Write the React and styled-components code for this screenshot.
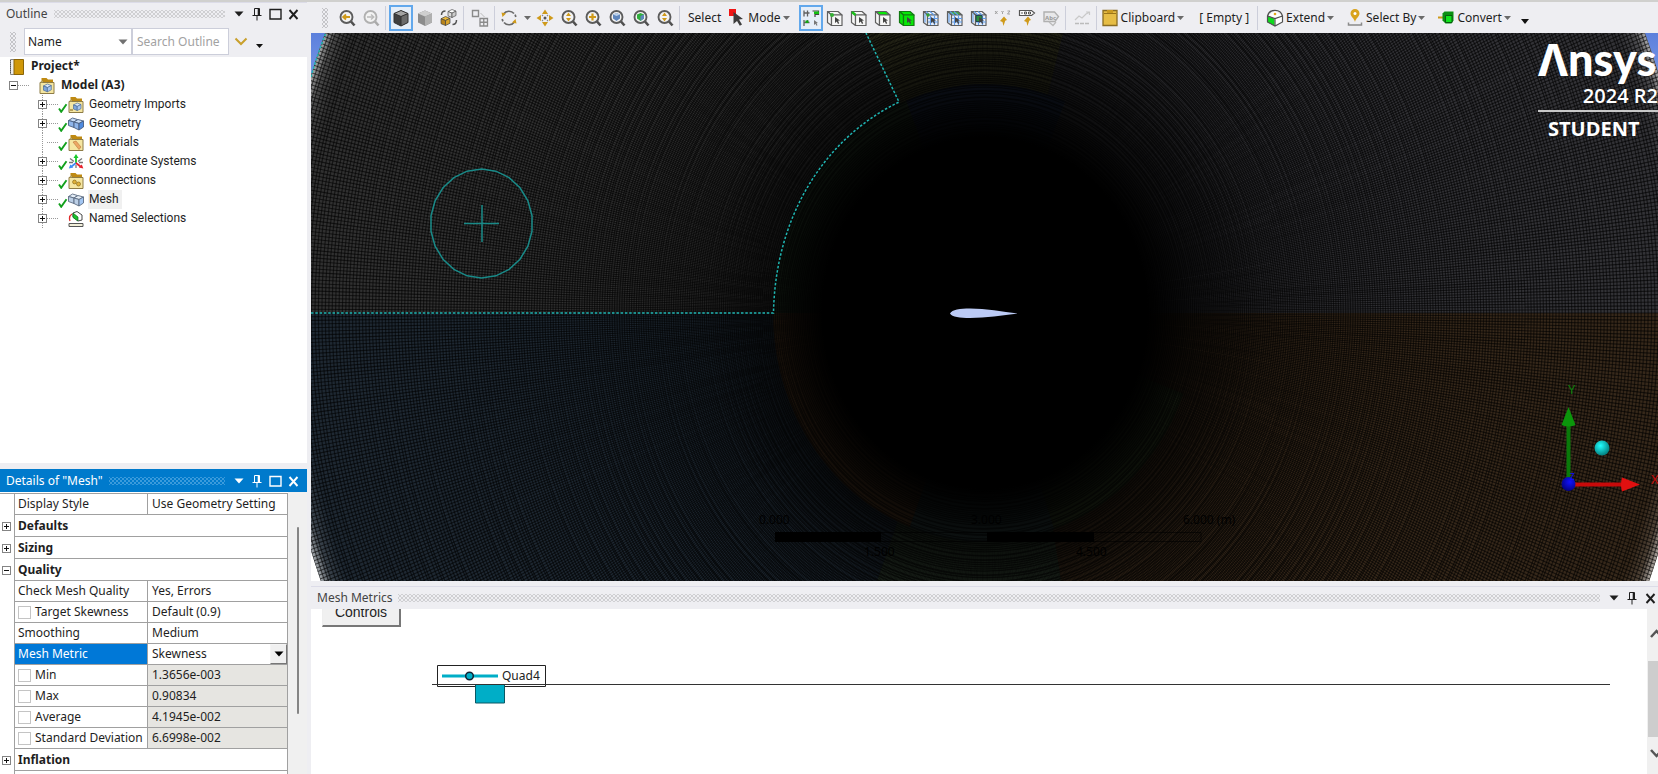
import React from 'react';
import styled, { createGlobalStyle, css } from 'styled-components';

const GlobalStyle = createGlobalStyle`
  *, *::before, *::after { box-sizing: border-box; }
  body {
    margin: 0;
    background: #eeeef2;
    color: #1e1e1e;
    font: 12px/16px "Noto Sans", "Open Sans", sans-serif;
  }
  button, input, select { font: inherit; color: inherit; margin: 0; }
`;

const dots = (color) => css`
  background-image: radial-gradient(${color} 1px, transparent 1px), radial-gradient(${color} 1px, transparent 1px);
  background-size: 4px 4px;
  background-position: 0 0, 2px 2px;
`;

/* ---------- shell ---------- */

const Shell = styled.div`
  display: flex;
  gap: 4px;
  height: 100vh;
  overflow: hidden;
  border-top: 2px solid #d0d0ce;
`;

const Sidebar = styled.aside`
  display: flex;
  flex-direction: column;
  gap: 6px;
  flex: none;
  width: 307px;
`;

const Workspace = styled.main`
  display: flex;
  flex-direction: column;
  flex: 1;
  min-width: 0;
`;

const Panel = styled.section`
  display: flex;
  flex-direction: column;
  min-height: 0;
  ${(p) => (p.$height ? `flex: none; height: ${p.$height}px;` : 'flex: 1;')}
`;

const TitleBar = styled.header`
  display: flex;
  align-items: center;
  gap: 6px;
  flex: none;
  height: 23px;
  padding: 0 ${(p) => (p.$flush ? 0 : 6)}px 0 6px;
  background: ${(p) => (p.$active ? '#007acc' : '#eeeef2')};
  color: ${(p) => (p.$active ? '#fff' : '#444')};
  border-top: 1px solid ${(p) => (p.$active ? '#007acc' : '#dcdce8')};
`;

const Title = styled.h2`
  margin: 0;
  font-size: 12px;
  line-height: 16px;
  font-weight: 400;
`;

const TitleGrip = styled.span`
  flex: 1;
  height: 8px;
  ${(p) => dots(p.$active ? '#3b9bdc' : '#cfcfd2')}
`;

const TitleButtons = styled.span`
  display: flex;
  gap: 2px;
`;

const TitleButton = styled.button`
  display: grid;
  place-items: center;
  width: 16px;
  height: 16px;
  padding: 0;
  border: 0;
  background: none;
  color: ${(p) => (p.$active ? '#fff' : '#1e1e1e')};
`;

const DownIcon = () => (
  <svg width="10" height="6" viewBox="0 0 10 6"><path d="M0.5 0.5h9L5 5.5z" fill="currentColor" /></svg>
);
const PinIcon = () => (
  <svg width="12" height="14" viewBox="0 0 12 14" fill="none" stroke="currentColor">
    <path d="M3.5 8V1.5h5V8" /><path d="M7.5 2v6" strokeWidth="1.6" /><path d="M1.5 8.5h9M6 9v4.5" />
  </svg>
);
const MaxIcon = () => (
  <svg width="13" height="12" viewBox="0 0 13 12"><path d="M1 1.5h11v9.5H1z" fill="none" stroke="currentColor" strokeWidth="1.4" /></svg>
);
const CloseIcon = () => (
  <svg width="11" height="11" viewBox="0 0 11 11"><path d="M1.5 1l8 9M9.500 1l-8 9" fill="none" stroke="currentColor" strokeWidth="1.9" /></svg>
);

function PanelTitle({ text, active, maximizable, flush }) {
  return (
    <TitleBar $active={active} $flush={flush}>
      <Title>{text}</Title>
      <TitleGrip $active={active} />
      <TitleButtons>
        <TitleButton $active={active} aria-label="Options"><DownIcon /></TitleButton>
        <TitleButton $active={active} aria-label="Pin"><PinIcon /></TitleButton>
        {maximizable && <TitleButton $active={active} aria-label="Maximize"><MaxIcon /></TitleButton>}
        <TitleButton $active={active} aria-label="Close"><CloseIcon /></TitleButton>
      </TitleButtons>
    </TitleBar>
  );
}

/* ---------- outline ---------- */

const FilterBar = styled.div`
  display: flex;
  flex: none;
  height: 32px;
  padding: 3px 0 2px 10px;
`;

const Grip = styled.span`
  align-self: center;
  flex: none;
  width: 6px;
  height: 20px;
  ${dots('#c4c4c8')}
`;

const SelectWrap = styled.label`
  position: relative;
  display: flex;
  width: ${(p) => (p.$fill ? '100%' : '108px')};
  margin-left: ${(p) => (p.$fill ? 0 : 8)}px;
`;

const FilterSelect = styled.select`
  appearance: none;
  width: 100%;
  padding: 0 3px;
  border: 1px solid #ccceda;
  border-radius: 0;
  background: #fff;
`;

const SelectArrow = styled.span`
  position: absolute;
  right: 4px;
  top: 50%;
  display: grid;
  transform: translateY(-50%);
  color: #717171;
  pointer-events: none;
`;

const SearchBox = styled.input`
  width: 97px;
  padding: 0 4px;
  border: 1px solid #ccceda;
  background: #fff;
  &::placeholder { color: #a2a2a2; opacity: 1; }
`;

const PlainButton = styled.button`
  display: grid;
  place-items: center;
  width: ${(p) => p.$width || 24}px;
  padding: ${(p) => (p.$low ? '8px 0 0' : 0)};
  border: 0;
  background: none;
`;

const Tree = styled.ul`
  flex: 1;
  margin: 0;
  padding: 0;
  list-style: none;
  background: #fff;
  font: 12px/16px Roboto, "Noto Sans", sans-serif;
`;

const TreeRow = styled.li`
  display: flex;
  align-items: center;
  height: 19px;
  padding-left: ${(p) => [8, 9, 38][p.$level]}px;
  ${(p) => p.$level < 2 && 'font-weight: 700; font-family: "Noto Sans", sans-serif;'}
`;

const Branch = styled.span`
  display: flex;
  align-items: center;
  width: 9px;
  height: 100%;
  background: ${(p) => (p.$line ? 'repeating-linear-gradient(#999 0 1px, transparent 1px 2px) 4px 0 / 1px 100% no-repeat' : 'none')};
`;

const Stub = styled.span`
  width: 11px;
  height: 1px;
  margin-right: ${(p) => p.$after || 0}px;
  background: repeating-linear-gradient(90deg, #999 0 1px, transparent 1px 2px);
`;

const Expander = styled.button`
  display: block;
  width: 9px;
  height: 9px;
  padding: 0;
  border: 1px solid #848484;
  background:
    linear-gradient(#111, #111) center / 5px 1px no-repeat,
    ${(p) => (p.$open ? '' : 'linear-gradient(#111, #111) center / 1px 5px no-repeat,')}
    #fff;
`;

const CheckSlot = styled.span`
  display: flex;
  align-items: flex-end;
  width: 10px;
  height: 17px;
`;

const IconSlot = styled.span`
  display: flex;
  width: 16px;
  height: 16px;
`;

const TreeLabel = styled.span`
  height: 19px;
  margin-left: ${(p) => p.$gap}px;
  padding: 1px 3px 0 1px;
  background: ${(p) => (p.$selected ? '#f0f0f0' : 'none')};
`;

const CheckMark = () => (
  <svg width="10" height="10" viewBox="0 0 10 10"><path d="M1 5.500l2.200 3.300L8.500 1.200" fill="none" stroke="#12a01c" strokeWidth="1.900" /></svg>
);

const Cube = ({ x = 0, y = 0, s = 1, top = '#dbe8f8', left = '#7ea6dc', right = '#a9c6ee', line = '#3d5f92' }) => (
  <g transform={`translate(${x} ${y}) scale(${s})`} stroke={line} strokeWidth=".8" strokeLinejoin="round">
    <path d="M0 2.500L5 0l5 2L5 4.500z" fill={top} />
    <path d="M0 2.500l5 2V10L0 8z" fill={left} />
    <path d="M5 4.500L10 2v5.500L5 10z" fill={right} />
  </g>
);

const Folder = ({ children }) => (
  <svg width="16" height="16" viewBox="0 0 16 16">
    <path d="M2.500 0h5l1.500 1.500h5V5H2.500z" fill="#bf8a12" />
    <path d="M1 4.500h14V15.500H1z" fill="#f5e6a2" stroke="#8e7c46" />
    <path d="M1 4.500l3-2v2z" fill="#d8c274" stroke="#8e7c46" strokeWidth=".5" />
    {children}
  </svg>
);

const DoubleBlock = ({ shades, line }) => (
  <svg width="16" height="16" viewBox="0 0 16 16" stroke={line} strokeWidth=".9" strokeLinejoin="round">
    <path d="M.5 4.500l4-2.500 5 1.500-3.500 2.500z" fill={shades[0]} />
    <path d="M.5 4.500L6 6v5.500L.5 9.500z" fill={shades[1]} />
    <path d="M6 6l4-2.500 5.500 1.500L11 7.500z" fill={shades[0]} />
    <path d="M6 6l5 1.500v6.500l-5-2.500z" fill={shades[1]} />
    <path d="M11 7.500L15.500 5v6L11 14z" fill={shades[2]} />
  </svg>
);

const treeIcons = {
  project: (
    <svg width="16" height="16" viewBox="0 0 16 16">
      <path d="M2.500.5h4v15h-4z" fill="#eee" stroke="#888" />
      <path d="M2.500 1v14" stroke="#555" strokeDasharray="1 1" />
      <path d="M6 .5h9.500v15H6z" fill="#cf9708" stroke="#8a6508" />
    </svg>
  ),
  model: <Folder><Cube x={4.5} y={6} s={0.78} /></Folder>,
  imports: <Folder><Cube x={5.5} y={6} s={0.75} /><path d="M2 13h3" stroke="#7a5a10" /></Folder>,
  geometry: <DoubleBlock shades={['#c8dcf6', '#8fb5ea', '#4f8be0']} line="#4a5f80" />,
  materials: <Folder><path d="M5 7l3-1 5 6-2 2.500z" fill="#eda765" stroke="#b8793a" strokeWidth=".6" /></Folder>,
  coords: (
    <svg width="16" height="16" viewBox="0 0 16 16" fill="none">
      <path d="M8 9V3" stroke="#18c92a" strokeWidth="1.800" /><path d="M5.500 4L8 0l2.500 4z" fill="#18c92a" />
      <path d="M8 9l-4.500 3.500" stroke="#3f8df5" strokeWidth="1.800" /><path d="M.8 14.500l1.500-4 3 3z" fill="#3f8df5" />
      <path d="M8 9l4.500 3.500" stroke="#e8202c" strokeWidth="1.800" /><path d="M15.300 14.500l-1.500-4-3 3z" fill="#e8202c" />
      <path d="M2 4.500l4 3M14 4.500l-4 3M1 8.500h4M11 8.500h4M8 11v3" stroke="#777" strokeWidth="1.300" />
    </svg>
  ),
  connections: (
    <Folder>
      <circle cx="6.500" cy="9" r="1.900" fill="#e0b23a" stroke="#8d6c1a" strokeWidth=".7" />
      <circle cx="10.500" cy="11" r="2" fill="#e0b23a" stroke="#8d6c1a" strokeWidth=".7" />
    </Folder>
  ),
  mesh: <DoubleBlock shades={['#e4edf6', '#bccfe6', '#a3c6f2']} line="#5c6c82" />,
  named: (
    <svg width="16" height="16" viewBox="0 0 16 16">
      <path d="M5 2l4-1.500L14 4v5L10 10 5 6z" fill="#fff" stroke="#333" strokeWidth=".9" />
      <path d="M5 2l5 4v4L5 6.500z" fill="#19c42a" stroke="#126a1a" strokeWidth=".7" />
      <path d="M4 3C1.500 4.500 1 7 2 10" fill="none" stroke="#e02a2a" strokeWidth="1.300" />
      <path d="M1 12.500h14v3H1z" fill="#f2efd9" stroke="#555" />
    </svg>
  ),
};

const treeItems = [
  ['Geometry Imports', 'imports', true, true],
  ['Geometry', 'geometry', true, true],
  ['Materials', 'materials', false, true],
  ['Coordinate Systems', 'coords', true, true],
  ['Connections', 'connections', true, true],
  ['Mesh', 'mesh', true, true],
  ['Named Selections', 'named', true, false],
];

function Outline() {
  return (
    <Panel>
      <PanelTitle text="Outline" maximizable />
      <FilterBar>
        <Grip />
        <SelectWrap>
          <FilterSelect aria-label="Filter by" defaultValue="Name"><option>Name</option></FilterSelect>
          <SelectArrow><DownIcon /></SelectArrow>
        </SelectWrap>
        <SearchBox aria-label="Search Outline" placeholder="Search Outline" />
        <PlainButton aria-label="Expand search">
          <svg width="14" height="9" viewBox="0 0 14 9"><path d="M1.500 1.500L7 7l5.500-5.500" fill="none" stroke="#c9a02c" strokeWidth="2" /></svg>
        </PlainButton>
        <PlainButton $width={12} $low aria-label="More"><svg width="7" height="4" viewBox="0 0 7 4"><path d="M0 0h7L3.500 4z" fill="#111" /></svg></PlainButton>
      </FilterBar>
      <Tree>
        <TreeRow $level={0}><IconSlot>{treeIcons.project}</IconSlot><TreeLabel $gap={6}>Project*</TreeLabel></TreeRow>
        <TreeRow $level={1}>
          <Branch><Expander $open aria-label="Collapse Model" /></Branch>
          <Stub $after={10} />
          <IconSlot>{treeIcons.model}</IconSlot>
          <TreeLabel $gap={5}>Model (A3)</TreeLabel>
        </TreeRow>
        {treeItems.map(([name, icon, expandable, checked]) => (
          <TreeRow key={name} $level={2}>
            <Branch $line>{expandable && <Expander aria-label={`Expand ${name}`} />}</Branch>
            <Stub />
            <CheckSlot>{checked && <CheckMark />}</CheckSlot>
            <IconSlot>{treeIcons[icon]}</IconSlot>
            <TreeLabel $gap={4} $selected={name === 'Mesh'}>{name}</TreeLabel>
          </TreeRow>
        ))}
      </Tree>
    </Panel>
  );
}

/* ---------- details ---------- */

const DetailsBody = styled.div`
  display: flex;
  flex: 1;
  min-height: 0;
  overflow: hidden;
  background: #fff;
`;

const DetailsTable = styled.table`
  flex: 1;
  align-self: flex-start;
  margin-top: 1px;
  table-layout: fixed;
  border-collapse: separate;
  border-spacing: 0;
  border-top: 1px solid #a0a0a0;
`;

const GutterCell = styled.td`
  width: 14px;
  padding: 0 0 0 2px;
`;

const NameCell = styled.th`
  width: 133px;
  height: ${(p) => (p.$section ? 22 : 21)}px;
  padding: 0 0 0 3px;
  border: solid #a0a0a0;
  border-width: 0 ${(p) => (p.$section ? 1 : 0)}px 1px 1px;
  text-align: left;
  white-space: nowrap;
  font-weight: ${(p) => (p.$section ? 700 : 400)};
  ${(p) => p.$selected && 'background: #0078d7; color: #fff;'}
`;

const ValueCell = styled.td`
  padding: 0 0 0 4px;
  border: solid #a0a0a0;
  border-width: 0 1px 1px 1px;
  white-space: nowrap;
  background: ${(p) => (p.$readOnly ? '#e6e5e1' : '#fff')};
`;

const CheckLabel = styled.label`
  display: flex;
  align-items: center;
  gap: 4px;
`;

const Check = styled.input`
  appearance: none;
  width: 13px;
  height: 13px;
  border: 1px solid #c4c4c4;
  background: #fff;
`;

const MetricSelect = styled.select`
  appearance: none;
  width: 100%;
  height: 20px;
  padding: 0;
  border: 0;
  background: none;
`;

const DropArrow = styled.span`
  position: absolute;
  right: 0;
  top: 0;
  display: grid;
  place-items: center;
  width: 17px;
  height: 20px;
  border: 1px solid;
  border-color: #f4f4f4 #777 #777 #f4f4f4;
  background: #f0f0f0;
  color: #000;
  pointer-events: none;
`;

const ThinTrack = styled.div`
  flex: none;
  width: 19px;
  padding: 35px 8px 60px 9px;
  background: #f0f0f0;
`;

const ThinThumb = styled.div`
  height: 100%;
  border-radius: 1px;
  background: #858585;
`;

const details = [
  { name: 'Display Style', value: 'Use Geometry Setting' },
  { section: 'Defaults' },
  { section: 'Sizing' },
  { section: 'Quality', open: true },
  { name: 'Check Mesh Quality', value: 'Yes, Errors' },
  { name: 'Target Skewness', value: 'Default (0.9)', check: true },
  { name: 'Smoothing', value: 'Medium' },
  { name: 'Mesh Metric', value: 'Skewness', selected: true },
  { name: 'Min', value: '1.3656e-003', check: true, readOnly: true },
  { name: 'Max', value: '0.90834', check: true, readOnly: true },
  { name: 'Average', value: '4.1945e-002', check: true, readOnly: true },
  { name: 'Standard Deviation', value: '6.6998e-002', check: true, readOnly: true },
  { section: 'Inflation' },
];

function Details() {
  return (
    <Panel $height={305}>
      <PanelTitle text={'Details of "Mesh"'} active maximizable />
      <DetailsBody>
        <DetailsTable>
          <tbody>
            {details.map((d) =>
              d.section ? (
                <tr key={d.section}>
                  <GutterCell><Expander $open={d.open} aria-label={`Toggle ${d.section}`} /></GutterCell>
                  <NameCell $section colSpan={2} scope="rowgroup">{d.section}</NameCell>
                </tr>
              ) : (
                <tr key={d.name}>
                  <GutterCell />
                  <NameCell scope="row" $selected={d.selected}>
                    {d.check ? <CheckLabel><Check type="checkbox" />{d.name}</CheckLabel> : d.name}
                  </NameCell>
                  <ValueCell $readOnly={d.readOnly}>
                    {d.selected ? (
                      <SelectWrap $fill>
                        <MetricSelect aria-label={d.name} defaultValue={d.value}><option>{d.value}</option></MetricSelect>
                        <DropArrow><DownIcon /></DropArrow>
                      </SelectWrap>
                    ) : d.value}
                  </ValueCell>
                </tr>
              )
            )}
            <tr><GutterCell /><NameCell $section colSpan={2} /></tr>
          </tbody>
        </DetailsTable>
        <ThinTrack><ThinThumb /></ThinTrack>
      </DetailsBody>
    </Panel>
  );
}

/* ---------- toolbar ---------- */

const Toolbar = styled.div`
  display: flex;
  align-items: center;
  flex: none;
  height: 31px;
  padding: 0 0 0 11px;
  overflow: hidden;
`;

const ToolGroup = styled.div`
  display: flex;
  align-items: center;
  flex: none;
  margin-left: ${(p) => p.$before || 0}px;
`;

const ToolButton = styled.button`
  display: grid;
  place-items: center;
  flex: none;
  width: 24px;
  height: 26px;
  padding: 0;
  border: ${(p) => (p.$active ? '2px solid #62a8ec' : '0')};
  background: ${(p) => (p.$active ? '#e6eef8' : 'none')};
`;

const TextButton = styled.button`
  display: flex;
  align-items: center;
  gap: 2px;
  flex: none;
  height: 26px;
  margin-left: ${(p) => p.$before || 0}px;
  padding: 0;
  border: 0;
  background: none;
  white-space: nowrap;
`;

const ToolText = styled.span`
  flex: none;
  margin: 0 ${(p) => p.$after || 0}px 0 ${(p) => p.$before || 0}px;
  white-space: pre;
`;

const Separator = styled.span`
  flex: none;
  width: 1px;
  height: 24px;
  margin: 0 ${(p) => p.$after ?? 4}px 0 2px;
  background: #ccceda;
`;

const Icon = ({ children }) => <svg width="18" height="18" viewBox="0 0 18 18" fill="none">{children}</svg>;

const Lens = ({ children, dim }) => (
  <Icon>
    <circle cx="8.500" cy="8" r="6" stroke={dim ? '#b0b0b0' : '#5c5c5c'} strokeWidth="1.900" fill="#f3f3f3" />
    <path d="M13 12.500l3.500 4" stroke={dim ? '#aaa' : '#505050'} strokeWidth="2.600" />
    {children}
  </Icon>
);

const Pick = () => <path d="M9 8l5 3.500-2 .3 1.200 2.500-1.200.6-1.200-2.500L9 14z" fill="#444" />;

const Box3 = ({ top = '#f6f6f6', left = '#f6f6f6', right = '#f6f6f6', line = '#606060', children }) => (
  <Icon>
    <g stroke={line} strokeWidth="1.200" strokeLinejoin="round">
      <path d="M1.500 2.500h10.500L16 6H5.500z" fill={top} />
      <path d="M1.500 2.500l4 3.500v10.500l-4-3z" fill={left} />
      <path d="M5.500 6H16v10.500H5.500z" fill={right} />
    </g>
    {children}
    <Pick />
  </Icon>
);

const GridLines = () => (
  <path d="M8.500 6.500v9.500M12.500 6.500v9.500M3 4.500v9M6 9.500h10M6 13h10M4 2.500l4 3.500M8 2.500l4 3.500" stroke="#5f9be8" strokeWidth="1.200" />
);

const Iso = ({ dark }) => (
  <Icon>
    <path d="M9 1.500l7 3v9l-7 3.500-7-3.500v-9z" fill={dark ? '#3f3f3f' : '#8c8c8c'} />
    <path d="M9 1.500l7 3-7 3-7-3z" fill={dark ? '#a4a4a4' : '#cfcfcf'} />
    <path d="M9 7.500l7-3v9L9 17z" fill={dark ? '#6b6b6b' : '#b0b0b0'} />
    {dark && <path d="M9 1.500l7 3v9l-7 3.500-7-3.500v-9zM2 4.500l7 3 7-3M9 7.500V17" stroke="#333" />}
  </Icon>
);

const Caret = () => <svg width="7" height="4" viewBox="0 0 7 4"><path d="M0 0h7L3.500 4z" fill="#6a6a6a" /></svg>;

const gold = '#cf9a1a';
const green = '#08e808';

const tools = {
  prev: <Lens><path d="M5 8h7M8 5.500L5.200 8 8 10.500" stroke={gold} strokeWidth="1.900" /></Lens>,
  next: <Lens dim><path d="M5 8h7M9 5.500L11.800 8 9 10.500" stroke="#bbb" strokeWidth="1.400" /></Lens>,
  wire: (
    <Icon>
      <Cube x={8} y={0.5} s={0.8} top="#fff" left="#ddd" right="#ccc" line="#444" />
      <Cube x={1} y={7.500} s={0.9} top="#e8b73a" left="#b8831a" right="#d9a42c" line="#444" />
      <path d="M1.500 6c0-2.500 1.500-4 4-4M16.500 11c0 3-1.500 4.500-4 4.500" stroke="#555" strokeWidth="1.500" />
    </Icon>
  ),
  layout: (
    <Icon>
      <path d="M1.500 1.500h6v6h-6z" stroke="#8a8a8a" strokeWidth="1.400" />
      <path d="M9.500 4l4 4" stroke="#bbb" />
      <path d="M9 9.500h7.500V17H9zM12.750 9.500V17M9 13.250h7.500" stroke="#8a8a8a" strokeWidth="1.300" />
    </Icon>
  ),
  rotate: (
    <Icon>
      <path d="M3.500 5A6.800 6.800 0 0 1 14 4.500M14.500 13A6.800 6.800 0 0 1 4 13.500M2.200 10A6.800 6.800 0 0 0 3 12.300M15.800 8A6.800 6.800 0 0 0 15 5.700" stroke="#6a6a6a" strokeWidth="1.700" />
      <path d="M1.500 3.500l4.500 1-3.500 3.500zM16.500 14.500l-4.500-1 3.500-3.500z" fill={gold} />
    </Icon>
  ),
  pan: (
    <Icon>
      <path d="M9 .5l3 4.500H6zM9 17.500l3-4.500H6zM.5 9l4.500-3v6zM17.500 9l-4.500-3v6z" fill={gold} />
      <circle cx="9" cy="9" r="1.500" fill="#555" />
      <path d="M6 6l1 1M12 6l-1 1M6 12l1-1M12 12l-1-1" stroke="#888" strokeWidth="1.200" />
    </Icon>
  ),
  zoom: <Lens><path d="M8.500 3.500l2.500 3.500H6zM8.500 12.500L11 9H6z" fill={gold} /></Lens>,
  zoomIn: <Lens><path d="M8.500 4.500v7M5 8h7" stroke={gold} strokeWidth="2.200" /></Lens>,
  fit: <Lens><path d="M8.500 4l3.500 1.500v4L8.500 12 5 9.500v-4z" fill="#5e86bd" /><path d="M5 5.500L8.500 7 12 5.500 8.500 4z" fill="#b9cfea" /></Lens>,
  fitSel: <Lens><path d="M8.500 4l3.500 1.500v4L8.500 12 5 9.500v-4z" fill="#2fae3c" /><path d="M8.500 7L12 5.500v4L8.500 12z" fill="#5e86bd" /></Lens>,
  arrow: (
    <Icon>
      <path d="M1 0h7v7H1z" fill="#f01414" />
      <path d="M5.500 3l9.500 7-4 .5 3 5-2.200 1.200L9 12l-3.500 3z" fill="#3c3c3c" />
    </Icon>
  ),
  smart: (
    <Icon>
      <path d="M2 1.500v6M2 4h5.500M5.500 1.500v6M2 11v6M2 13.500h5.500M5.500 11v2" stroke="#606060" strokeWidth="1.300" />
      <path d="M10.500 2h6v3.500h-3.500v2.500" stroke="#444" strokeWidth="1.200" />
      <path d="M12 2.500h5V5h-5z" fill="#12c012" /><path d="M3.500 11.500h3V14h-3z" fill="#12a812" />
      <path d="M12 11l4 3-1.500.3 1 2-1 .5-1-2L12 16z" fill="#777" />
    </Icon>
  ),
  vertex: <Box3><circle cx="6" cy="6" r="2" fill="#35b035" /></Box3>,
  edge: <Box3><path d="M2 3l3.500 3" stroke="#18c018" strokeWidth="2.400" /></Box3>,
  face: <Box3 top={green} />,
  body: <Box3 top={green} left={green} right={green} line="#127a12" />,
  node: <Box3 right="#e6eefa"><GridLines /><circle cx="6" cy="6" r="1.700" fill="#35a035" /></Box3>,
  elemFace: <Box3 top="#3fae3f" right="#e6eefa"><GridLines /></Box3>,
  elem: <Box3 right="#e6eefa"><GridLines /><path d="M6 6.500h6v6H6z" fill="#2b8f3c" stroke="#245" /></Box3>,
  chart: (
    <Icon>
      <path d="M2 11l4-4 3 2 4-4 3-1.500M13 3h3.500v3" stroke="#c9c9c9" strokeWidth="1.200" />
      <path d="M2 14.500h14" stroke="#bbb" strokeWidth="1.500" strokeDasharray="4 1" />
    </Icon>
  ),
  clipboard: (
    <Icon>
      <path d="M2 1.500h14v15H2z" fill="#e6bd45" stroke="#8a6d22" strokeWidth="1.300" />
      <path d="M6 1h6v3H6z" fill="#c99a22" /><path d="M3 4.500h12" stroke="#9a7418" />
    </Icon>
  ),
  extend: (
    <Icon>
      <path d="M1.500 7.500L9 1.500l7.500 6v5.500L9 17l-7.500-4z" fill="#fff" />
      <path d="M1.500 7.500L8.500 9.500v7L1.500 13.500z" fill="#0ddb1d" />
      <path d="M1.500 7c1-4 4-5.700 7.500-5.700S15.500 3 16.500 7v6L9 17l-7.500-4zM1.500 7L9 9.500 16.500 7M9 9.500V17" stroke="#505050" strokeWidth="1.200" />
      <circle cx="9" cy="5" r="1.300" fill="#e2a61c" />
    </Icon>
  ),
  selectBy: (
    <Icon>
      <path d="M9 0a4.500 4.500 0 0 1 4.500 4.500C13.500 7.500 10 9 9 13 8 9 4.500 7.500 4.500 4.500A4.500 4.500 0 0 1 9 0z" fill="#d9a31c" />
      <circle cx="9" cy="4.500" r="1.500" fill="#fff" /><path d="M2.500 13.500v2.500h13v-2.500" stroke="#8b8b8b" strokeWidth="1.500" />
    </Icon>
  ),
  convert: (
    <Icon>
      <path d="M1 8.500h5" stroke={gold} strokeWidth="2" />
      <path d="M5.500 4.500l2-2h9v9l-2 3h-6l-3-3z" fill="#0a8f12" />
      <path d="M8.500 6.500h6.500v7H8.500z" fill="#0fe51c" stroke="#0a5a10" />
    </Icon>
  ),
  coords: (
    <Icon>
      <path d="M1 2l2.500 3M3.500 2L1 5M7.500 2l1 1.500 1-1.500M8.500 3.500V5M13.500 2H16l-2.500 3H16" stroke="#999" strokeWidth=".9" />
      <path d="M9.500 17l-1-4-2.500-1 4-4.500 3 3.500-1.800.8z" fill={gold} />
    </Icon>
  ),
  probe: (
    <Icon>
      <path d="M1.500 1.500h12l3 2.500-3 2.500h-12z" stroke="#555" strokeWidth="1.200" fill="#fff" />
      <path d="M4 3v2M6.500 3h2v2h-2zM10.500 3h2v2h-2z" stroke="#444" strokeWidth=".9" />
      <path d="M9.500 17l-1-4-2.500-1 4-4.500 3 3.500-1.800.8z" fill={gold} />
    </Icon>
  ),
  label: (
    <Icon>
      <path d="M2 3h10.500l4 4.500-3.500 5H2z" stroke="#b0b0b0" strokeWidth="1.400" fill="#e8e8ea" />
      <text x="3" y="10.500" fontSize="6" fontWeight="700" fill="#999">Abc</text>
      <path d="M7 13l4 3.500 3-3.500" stroke="#bbb" strokeWidth="1.300" />
    </Icon>
  ),
};

const Tool = ({ label, active, children }) => <ToolButton $active={active} aria-label={label} title={label}>{children}</ToolButton>;

function MainToolbar() {
  return (
    <Toolbar role="toolbar">
      <Grip />
      <ToolGroup $before={7}>
        <Tool label="Previous view">{tools.prev}</Tool>
        <Tool label="Next view">{tools.next}</Tool>
      </ToolGroup>
      <Separator $after={3} />
      <Tool label="Shaded exterior and edges" active><Iso dark /></Tool>
      <Tool label="Shaded exterior"><Iso /></Tool>
      <Tool label="Wireframe">{tools.wire}</Tool>
      <Separator />
      <Tool label="Show mesh">{tools.layout}</Tool>
      <Separator $after={2} />
      <Tool label="Rotate">{tools.rotate}</Tool>
      <PlainButton $width={12} aria-label="Rotate options"><Caret /></PlainButton>
      <Tool label="Pan">{tools.pan}</Tool>
      <Tool label="Zoom">{tools.zoom}</Tool>
      <Tool label="Box zoom">{tools.zoomIn}</Tool>
      <Tool label="Zoom to fit">{tools.fit}</Tool>
      <Tool label="Zoom to selection">{tools.fitSel}</Tool>
      <Tool label="Magnifier">{tools.zoom}</Tool>
      <Separator $after={8} />
      <ToolText $after={7}>Select</ToolText>
      <TextButton>{tools.arrow}<ToolText>Mode</ToolText><Caret /></TextButton>
      <ToolGroup $before={9}>
        <Tool label="Smart select" active>{tools.smart}</Tool>
        <Tool label="Vertex">{tools.vertex}</Tool>
        <Tool label="Edge">{tools.edge}</Tool>
        <Tool label="Face">{tools.face}</Tool>
        <Tool label="Body">{tools.body}</Tool>
        <Tool label="Node">{tools.node}</Tool>
        <Tool label="Element face">{tools.elemFace}</Tool>
        <Tool label="Element">{tools.elem}</Tool>
        <Tool label="Coordinates">{tools.coords}</Tool>
        <Tool label="Probe">{tools.probe}</Tool>
        <Tool label="Label">{tools.label}</Tool>
      </ToolGroup>
      <Separator />
      <Tool label="Chart">{tools.chart}</Tool>
      <Separator />
      <TextButton>{tools.clipboard}<ToolText>Clipboard</ToolText><Caret /></TextButton>
      <ToolText $before={15} $after={6}>[ Empty ]</ToolText>
      <Separator $after={8} />
      <TextButton>{tools.extend}<ToolText>Extend</ToolText><Caret /></TextButton>
      <TextButton $before={12}>{tools.selectBy}<ToolText>Select By</ToolText><Caret /></TextButton>
      <TextButton $before={12}>{tools.convert}<ToolText>Convert</ToolText><Caret /></TextButton>
      <PlainButton $width={28} $low aria-label="More tools"><svg width="8" height="5" viewBox="0 0 8 5"><path d="M0 0h8L4 5z" fill="#111" /></svg></PlainButton>
    </Toolbar>
  );
}

/* ---------- graphics view ---------- */

const Viewport = styled.div`
  position: relative;
  flex: 1;
  min-height: 0;
  margin-bottom: 5px;
  overflow: hidden;
  background: linear-gradient(#5c80dc, #7a9ae8 10%, #fff 90%);
`;

const Scene = styled.svg`
  display: block;
  width: 100%;
  height: 100%;
`;

const Brand = styled.div`
  position: absolute;
  top: 0;
  right: 0;
  width: 120px;
  color: #fff;
`;

const BrandName = styled.div`
  font: 900 45px/52px Lato, sans-serif;
  white-space: nowrap;
`;

const BrandMark = styled.span`
  font-family: "Noto Sans", sans-serif;
  font-weight: 700;
`;

const BrandRelease = styled.div`
  text-align: right;
  white-space: nowrap;
  font: 600 20px/22px "Open Sans", sans-serif;
`;

const BrandEdition = styled.div`
  margin-top: 3px;
  padding: 5px 0 0 10px;
  border-top: 2px solid #c8c8c8;
  font: 700 20px/24px "Open Sans", sans-serif;
`;

const CX = 674;
const CY = 280;
const R = 709;
const K = 1.08;

const ringPath = (() => {
  let d = '';
  for (let r = R; r > 150; r -= 1.2 + 2.4 * (r / R)) {
    const a = r.toFixed(2);
    const b = (r * K).toFixed(2);
    d += `M${(CX - r).toFixed(2)} ${CY}a${a} ${b} 0 1 1 ${(2 * r).toFixed(2)} 0a${a} ${b} 0 1 1 ${(-2 * r).toFixed(2)} 0`;
  }
  return d;
})();

const spokePath = (() => {
  let d = '';
  const n = 1240;
  for (let i = 0; i < n; i += 1) {
    const t = (i / n) * Math.PI * 2;
    const c = Math.cos(t);
    const s = Math.sin(t) * K;
    d += `M${(CX + 150 * c).toFixed(1)} ${(CY + 150 * s).toFixed(1)}L${(CX + R * c).toFixed(1)} ${(CY + R * s).toFixed(1)}`;
  }
  return d;
})();

const markerPoints = Array.from({ length: 22 }, (_, i) => {
  const t = ((i + 0.5) / 22) * Math.PI * 2;
  return `${(170.5 + 51 * Math.cos(t)).toFixed(1)},${(190.5 + 54.5 * Math.sin(t)).toFixed(1)}`;
}).join(' ');

function MeshScene() {
  return (
    <Scene viewBox="0 0 1347 548" preserveAspectRatio="xMidYMid slice" role="img" aria-label="Airfoil mesh">
      <defs>
        <clipPath id="domain"><ellipse cx={CX} cy={CY} rx={R} ry={R * K} /></clipPath>
        <clipPath id="inner"><ellipse cx={CX} cy={CY} rx="212" ry="229" /></clipPath>
        <radialGradient id="rim" gradientUnits="userSpaceOnUse" cx="0" cy="0" r={R} gradientTransform={`translate(${CX} ${CY}) scale(1 ${K})`}>
          <stop offset=".965" stopColor="#fff" stopOpacity="0" />
          <stop offset=".985" stopColor="#fff" stopOpacity=".12" />
          <stop offset="1" stopColor="#fff" stopOpacity=".6" />
        </radialGradient>
        <radialGradient id="core" gradientUnits="userSpaceOnUse" cx="0" cy="0" r="280" gradientTransform={`translate(${CX} ${CY}) scale(1 ${K})`}>
          <stop offset=".58" stopColor="#000" />
          <stop offset=".74" stopColor="#000" stopOpacity=".3" />
          <stop offset="1" stopColor="#000" stopOpacity="0" />
        </radialGradient>
        <radialGradient id="ball" cx=".4" cy=".35" r=".7"><stop offset="0" stopColor="#2ff" /><stop offset="1" stopColor="#077" /></radialGradient>
        <radialGradient id="origin" cx=".6" cy=".35" r=".8"><stop offset="0" stopColor="#11f" /><stop offset="1" stopColor="#006" /></radialGradient>
      </defs>
      <g clipPath="url(#domain)">
        <rect width="674" height="280" fill="#303030" />
        <rect x="674" width="673" height="280" fill="#323236" />
        <rect y="280" width="674" height="268" fill="#1e2832" />
        <rect x="674" y="280" width="673" height="268" fill="#36281a" />
        <path d="M555 0L588 69 674 280 735 69 752 0z" fill="#3c3c26" />
        <path d="M566 548L600 450 674 280 735 450 750 548z" fill="#283428" />
        <g clipPath="url(#inner)">
          <path d="M674 280H440V0h130z" fill="#243424" />
          <path d="M674 280L570 0h210z" fill="#1e2a40" />
          <path d="M674 280H440v268h140z" fill="#4a3420" />
          <path d="M674 280L580 548h180z" fill="#283838" />
          <path d="M674 280L760 548h160V380z" fill="#2e3a22" />
        </g>
        <rect width="1347" height="548" fill="url(#rim)" />
        <path d={ringPath} fill="none" stroke="#000" strokeWidth="1.2" strokeOpacity=".55" />
        <path d={spokePath} fill="none" stroke="#000" strokeWidth="1.1" strokeOpacity=".6" />
        <rect width="1347" height="548" fill="url(#core)" />
      </g>

      <path d="M639 280.500c2-4 10-5 20-5 16 0 32 3 48 5-16 2-32 4.500-48 4.500-10 0-18-1-20-4.500z" fill="#bccbf5" />

      <g fill="none" stroke="#1fb5b2" strokeWidth="1.500">
        <path d="M0 280H462.500C464 190 508 108 588 69L555 0" strokeDasharray="2.500 1.800" />
        <path d="M0 44Q6 22 15 0" strokeDasharray="2.500 1.800" />
        <polygon points={markerPoints} stroke="#198a88" />
        <path d="M171 172v37M153 190.500h35" stroke="#198a88" />
      </g>

      <g fill="#000" fontSize="12">
        <path d="M464 499h106v10H464zM676 499h107v10H676z" />
        <path d="M570 499.500h106M570 508.500h106M783 499.500h107v9H783" fill="none" stroke="#000" strokeOpacity=".6" />
        <text x="448" y="491">0.000</text>
        <text x="660" y="491">3.000</text>
        <text x="872" y="491">6.000 (m)</text>
        <text x="553" y="523">1.500</text>
        <text x="765" y="523">4.500</text>
      </g>

      <g>
        <path d="M1257.500 449V390" stroke="#0a7a0a" strokeWidth="4" />
        <path d="M1257.500 374l7 18q-7 3-14 0z" fill="#0b960b" />
        <path d="M1262 451.500h50" stroke="#c80a0a" strokeWidth="4" />
        <path d="M1329 451.500l-18 7q-2-7 0-14z" fill="#e01010" />
        <circle cx="1257.500" cy="451" r="7" fill="url(#origin)" />
        <circle cx="1291" cy="415" r="7.500" fill="url(#ball)" />
        <text x="1257" y="361" fontSize="13" fill="#0b7d0b">Y</text>
        <text x="1340" y="451" fontSize="13" fill="#c80a0a">X</text>
        <text x="1259" y="447" fontSize="8" fill="#11f">Z</text>
      </g>
    </Scene>
  );
}

/* ---------- mesh metrics ---------- */

const MetricsBody = styled.div`
  display: flex;
  flex: 1;
  min-height: 0;
  overflow: hidden;
  background: #fff;
`;

const MetricsContent = styled.div`
  display: flex;
  flex-direction: column;
  align-items: flex-start;
  flex: 1;
  min-width: 0;
  padding: 0 37px 0 11px;
`;

const ControlsButton = styled.button`
  width: 79px;
  height: 26px;
  margin-top: -8px;
  padding: 0 0 3px;
  border: 1px solid;
  border-color: #eee #777 #777 #eee;
  border-width: 1px 2px 2px 1px;
  background: #f0f0f0;
  font: 14px/16px "Liberation Sans", Arial, sans-serif;
`;

const Chart = styled.svg`
  display: block;
  width: 100%;
  height: 60px;
  margin-top: 29px;
`;

const ScrollTrack = styled.div`
  display: flex;
  flex-direction: column;
  justify-content: space-between;
  align-items: flex-start;
  flex: none;
  width: 11px;
  padding: 18px 0 14px 1px;
  overflow: hidden;
  background: #f0f0f0;
`;

const ScrollThumb = styled.div`
  width: 17px;
  height: 76px;
  margin-top: 10px;
  background: #cdcdcd;
`;

const Chevron = ({ down }) => (
  <svg width="17" height="12" viewBox="0 0 17 12">
    <path d={down ? 'M3 2l5.500 6L14 2' : 'M3 10l5.500-6L14 10'} fill="none" stroke="#555" strokeWidth="2.500" />
  </svg>
);

function Metrics() {
  return (
    <Panel $height={188}>
      <PanelTitle text="Mesh Metrics" flush />
      <MetricsBody>
        <MetricsContent>
          <ControlsButton>Controls</ControlsButton>
          <Chart role="img" aria-label="Element metrics">
            <path d="M115.500 9.500h108v21h-108z" fill="#fff" stroke="#222" />
            <path d="M120 20h56" stroke="#00aec7" strokeWidth="3" />
            <circle cx="147.500" cy="20" r="3.800" fill="#00aec7" stroke="#123" strokeWidth="1.500" />
            <text x="180" y="24" fontSize="12" fill="#222">Quad4</text>
            <line x1="110" y1="28.5" x2="100%" y2="28.5" stroke="#333" />
            <path d="M153.500 29v18h29V29" fill="#00aec7" stroke="#0a5964" />
          </Chart>
        </MetricsContent>
        <ScrollTrack><Chevron /><ScrollThumb /><Chevron down /></ScrollTrack>
      </MetricsBody>
    </Panel>
  );
}

export default function App() {
  return (
    <Shell>
      <GlobalStyle />
      <Sidebar>
        <Outline />
        <Details />
      </Sidebar>
      <Workspace>
        <MainToolbar />
        <Viewport>
          <MeshScene />
          <Brand aria-label="Ansys 2024 R2 Student">
            <BrandName><BrandMark>Λ</BrandMark>nsys</BrandName>
            <BrandRelease>2024 R2</BrandRelease>
            <BrandEdition>STUDENT</BrandEdition>
          </Brand>
        </Viewport>
        <Metrics />
      </Workspace>
    </Shell>
  );
}
